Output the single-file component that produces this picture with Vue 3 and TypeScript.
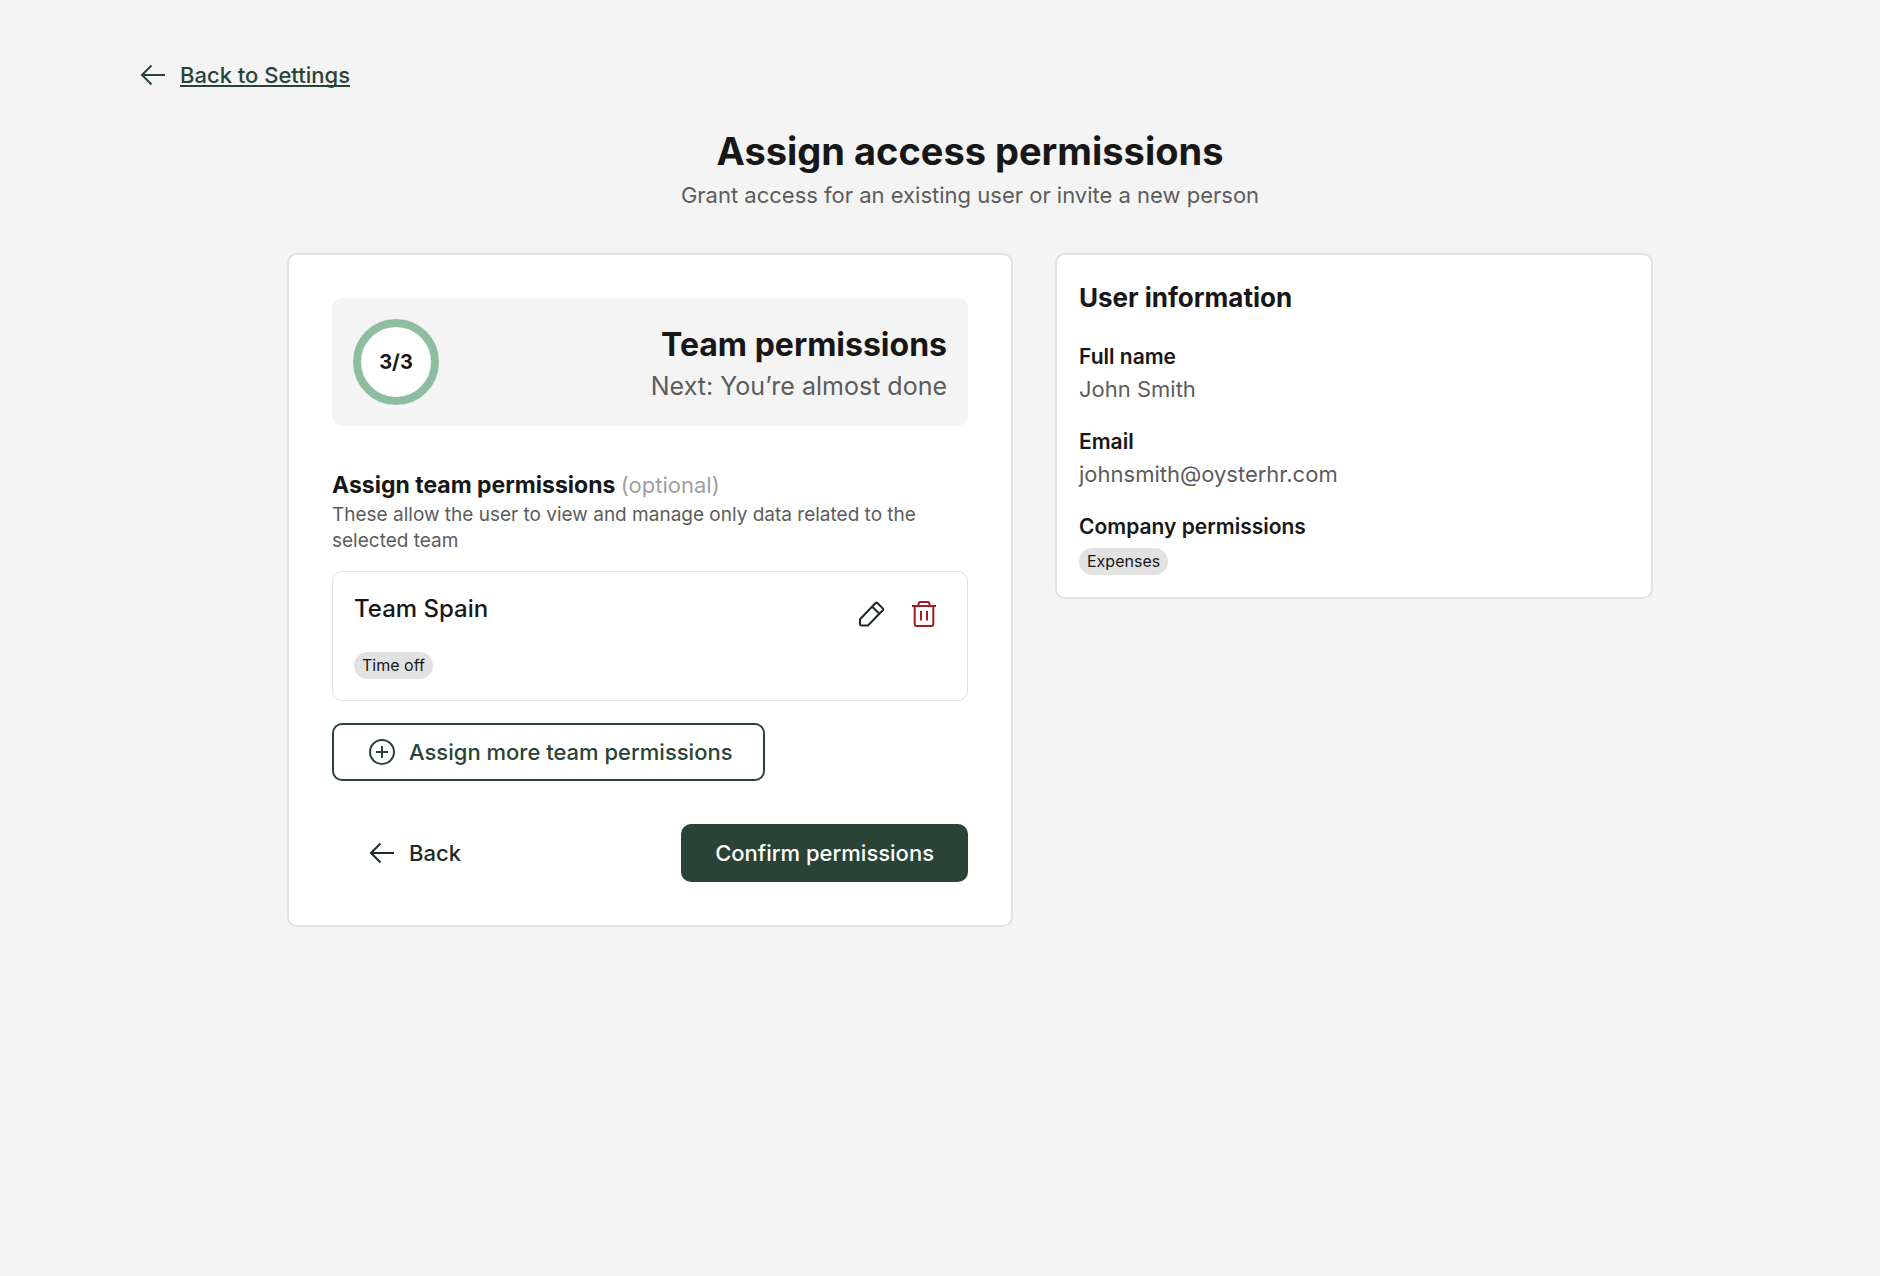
<script setup lang="ts">
interface Detail {
  label: string
  value: string
}

const details: Detail[] = [
  { label: 'Full name', value: 'John Smith' },
  { label: 'Email', value: 'johnsmith@oysterhr.com' },
]
const companyPermissions: string[] = ['Expenses']
const team = { name: 'Team Spain', permissions: ['Time off'] }
</script>

<template>
  <main class="page">
    <a class="back-link" href="#settings">
      <svg class="icon" viewBox="0 0 28 28" aria-hidden="true">
        <path d="M25 14H2.500M11.500 4.500 2 14l9.500 9.500" />
      </svg>
      <span>Back to Settings</span>
    </a>

    <header class="heading">
      <h1>Assign access permissions</h1>
      <p>Grant access for an existing user or invite a new person</p>
    </header>

    <div class="columns">
      <section class="card form-card">
        <div class="step">
          <div class="ring">3/3</div>
          <div class="step-text">
            <h2>Team permissions</h2>
            <p>Next: You’re almost done</p>
          </div>
        </div>

        <div class="intro">
          <h3>Assign team permissions <span>(optional)</span></h3>
          <p>These allow the user to view and manage only data related to the selected team</p>
        </div>

        <article class="team">
          <div class="team-info">
            <h4>{{ team.name }}</h4>
            <span v-for="p in team.permissions" :key="p" class="chip">{{ p }}</span>
          </div>
          <div class="team-actions">
            <button type="button" class="icon-button" aria-label="Edit team">
              <svg class="icon" viewBox="0 0 28 28" aria-hidden="true">
                <path d="M2 19.200 17.800 2.800q.7-.6 1.400 0l5.800 5.800q.6.700 0 1.400L10 25.500H3.500q-1.500 0-1.500-1.500zM14.300 6.800l7 7" />
              </svg>
            </button>
            <button type="button" class="icon-button danger" aria-label="Delete team">
              <svg class="icon" viewBox="0 0 28 28" aria-hidden="true">
                <path d="M2 6h24M4.700 6v18q0 2 2 2h14.600q2 0 2-2V6M8.500 6V4q0-2 2-2h7q2 0 2 2v2M11 11v9.500M17 11v9.500" />
              </svg>
            </button>
          </div>
        </article>

        <button type="button" class="button with-icon outline">
          <svg class="icon" viewBox="0 0 28 28" aria-hidden="true">
            <circle cx="14" cy="14" r="12" />
            <path d="M14 8v12M8 14h12" />
          </svg>
          Assign more team permissions
        </button>

        <div class="footer">
          <button type="button" class="button with-icon ghost">
            <svg class="icon" viewBox="0 0 28 28" aria-hidden="true">
              <path d="M26 14H3.500M12.500 4.500 3 14l9.500 9.500" />
            </svg>
            Back
          </button>
          <button type="button" class="button primary">Confirm permissions</button>
        </div>
      </section>

      <aside class="card info-card">
        <h2>User information</h2>
        <dl>
          <div v-for="d in details" :key="d.label">
            <dt>{{ d.label }}</dt>
            <dd>{{ d.value }}</dd>
          </div>
          <div>
            <dt>Company permissions</dt>
            <dd class="chips">
              <span v-for="p in companyPermissions" :key="p" class="chip">{{ p }}</span>
            </dd>
          </div>
        </dl>
      </aside>
    </div>
  </main>
</template>

<style>
body {
  background: #f4f4f4;
}
</style>

<style scoped>
.page {
  padding: 59px 80px 60px 140px;
  font-family: Inter, "Noto Sans", sans-serif;
  font-size: 22px;
  line-height: 32px;
  color: #171717;
}
.page * {
  box-sizing: border-box;
}
h1,
h2,
h3,
h4,
p,
dl,
dd {
  margin: 0;
}
.icon {
  flex: none;
  width: 28px;
  height: 28px;
  fill: none;
  stroke: currentColor;
  stroke-width: 2;
}
.back-link {
  display: inline-flex;
  align-items: center;
  gap: 12px;
  color: #294437;
  font-weight: 500;
  text-decoration: none;
}
.back-link span {
  text-decoration: underline;
  text-decoration-thickness: 2px;
  text-underline-offset: 2px;
  text-decoration-skip-ink: none;
}
.heading {
  margin-top: 26px;
  text-align: center;
}
h1 {
  font-size: 38px;
  line-height: 56px;
  font-weight: 700;
}
.heading p {
  color: #5c5c5c;
}
.columns {
  display: grid;
  grid-template-columns: 726fr 598fr;
  align-items: start;
  gap: 42px;
  max-width: 1366px;
  margin: 42px auto 0;
}
.card {
  background: #fff;
  border: 2px solid #e2e2e2;
  border-radius: 10px;
}
.form-card {
  padding: 43px;
}
.step {
  display: flex;
  align-items: center;
  justify-content: space-between;
  padding: 21px;
  border-radius: 10px;
  background: #f4f4f4;
}
.ring {
  display: grid;
  place-items: center;
  width: 86px;
  height: 86px;
  border: 8px solid #8fbd9f;
  border-radius: 50%;
  background: #fff;
  font-size: 20px;
  font-weight: 700;
}
.step-text {
  padding-top: 4px;
  text-align: right;
}
.step h2 {
  font-size: 32px;
  line-height: 44px;
  font-weight: 700;
}
.step p {
  font-size: 25px;
  line-height: 38px;
  color: #5c5c5c;
}
.intro {
  margin-top: 42px;
}
h3 {
  font-size: 23px;
  line-height: 34px;
  font-weight: 700;
}
h3 span {
  font-size: 22px;
  color: #9f9f9f;
  font-weight: 400;
}
.intro p {
  font-size: 19px;
  line-height: 26px;
  color: #5c5c5c;
}
.team {
  display: flex;
  justify-content: space-between;
  margin-top: 17px;
  padding: 21px;
  border: 1px solid #e2e2e2;
  border-radius: 10px;
}
.team-info {
  display: flex;
  flex-direction: column;
  align-items: flex-start;
  gap: 27px;
}
h4 {
  font-size: 24px;
  line-height: 32px;
  font-weight: 500;
}
.chip {
  padding: 0 8px;
  border-radius: 14px;
  background: #e2e2e2;
  color: #171717;
  font-size: 16px;
  line-height: 27px;
}
.team-actions {
  display: flex;
  align-items: flex-start;
  gap: 24px;
  padding: 7px 8px 0 0;
}
.icon-button {
  display: flex;
  padding: 0;
  border: 0;
  background: none;
  color: #1c2b25;
}
.danger {
  color: #a01c26;
}
.button {
  display: inline-flex;
  align-items: center;
  gap: 13px;
  padding: 11px 32px;
  border: 2px solid transparent;
  border-radius: 10px;
  background: none;
  font: inherit;
  font-weight: 500;
}
.with-icon {
  padding-right: 30px;
  padding-left: 34px;
}
.outline {
  margin-top: 22px;
  border-color: #294437;
  color: #294437;
}
.footer {
  display: flex;
  justify-content: space-between;
  margin-top: 43px;
}
.ghost {
  color: #1c2b25;
}
.primary {
  background: #294437;
  color: #fff;
}
.info-card {
  padding: 21px 22px 22px;
}
.info-card h2 {
  font-size: 26px;
  line-height: 44px;
  font-weight: 700;
}
dl {
  display: flex;
  flex-direction: column;
  gap: 21px;
  margin-top: 21px;
}
dt {
  font-size: 21px;
  font-weight: 600;
}
dd {
  color: #5c5c5c;
}
.chips {
  display: flex;
  gap: 8px;
  margin-top: 5px;
}
</style>
